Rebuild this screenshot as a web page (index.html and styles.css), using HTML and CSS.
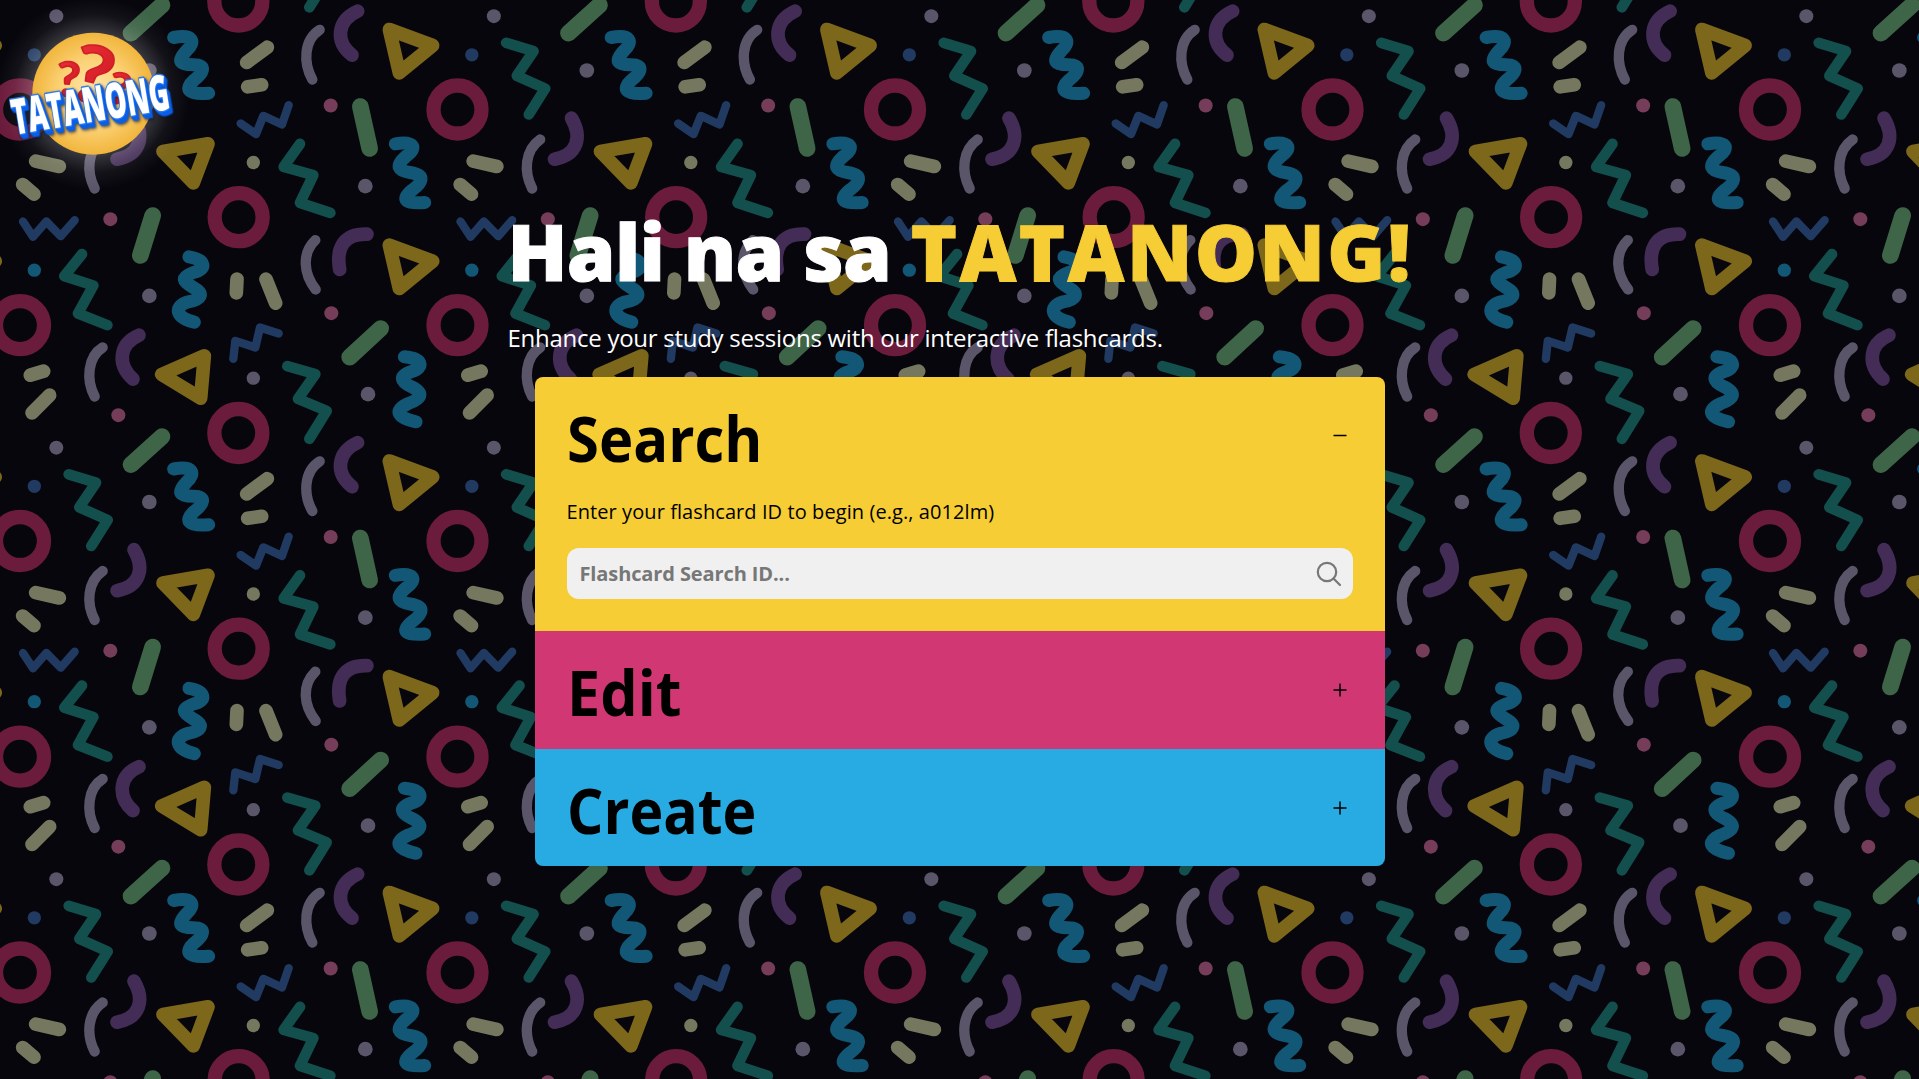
FILE: index.html
```html
<!DOCTYPE html>
<html lang="en">
<head>
<meta charset="utf-8">
<title>TATANONG</title>
<link rel="stylesheet" href="styles.css">
</head>
<body>
<svg class="confetti" width="1919" height="1079" viewBox="0 0 1919 1079" aria-hidden="true">
  <defs>
    <g id="tile">
      <g transform="scale(.33333)">
        <circle class="lavender-dot" cx="169" cy="53" r="21"/>
        <circle class="navy-dot" cx="103" cy="169" r="20"/>
        <path class="teal" d="M206 133L288 158L238 232L323 270L274 348"/>
        <circle class="ring" cx="60" cy="333" r="72"/>
        <path class="green" d="M393 104L486 20"/>
        <circle class="ring" cx="715" cy="9" r="72"/>
        <circle class="lavender-dot" cx="448" cy="216" r="22"/>
        <path class="blue" d="M521 117C580 106 588 130 560 156C528 190 540 199 580 199C624 199 608 225 582 245C552 272 564 290 626 284"/>
        <path class="beige" d="M740 192L802 146M743 265L785 259M107 488L178 504M68 558L102 587"/>
        <path class="navy" d="M722 375L768 407L790 352L846 378L866 320"/>
        <circle class="beige-dot" cx="760" cy="492" r="20"/>
        <path class="purple" d="M402 359C435 415 420 470 351 482"/>
        <path class="lavender" d="M308 423C262 455 258 520 284 570"/>
        <path class="gold" d="M489 459L624 436L580 553Z"/>
        <circle class="rose-dot" cx="331" cy="662" r="21"/>
      </g>
      <g transform="translate(260 0) scale(.33333)">
        <path class="purple" d="M293 38C230 67 225 130 276 170"/>
        <path class="lavender" d="M179 94C130 125 130 195 157 243"/>
        <path class="gold" d="M388 93L518 141L418 223Z"/>
        <circle class="rose-dot" cx="212" cy="321" r="21"/>
        <path class="green" d="M301 324L329 450"/>
        <path class="teal" d="M120 436L71 505L160 530L120 613L211 643"/>
        <circle class="lavender-dot" cx="316" cy="563" r="22"/>
        <path class="blue" d="M406 436C464 426 472 450 440 472C402 504 416 517 450 522C500 530 486 553 456 575C420 606 438 616 494 612"/>
      </g>
      <g transform="translate(0 215) scale(.33333)">
        <path class="navy" d="M69 24L99 70L139 24L182 68L224 20"/>
        <path class="green" d="M458 6L421 126"/>
        <circle class="ring" cx="716" cy="11" r="72"/>
        <circle class="blue-dot" cx="103" cy="170" r="20"/>
        <path class="teal" d="M246 122L193 188L280 216L234 300L322 335"/>
        <circle class="lavender-dot" cx="448" cy="247" r="22"/>
        <path class="blue" d="M567 130C618 138 622 168 580 177C540 192 548 204 580 222C616 242 602 258 565 265C516 280 530 314 583 326"/>
        <path class="beige" d="M711 197L709 238M798 197L827 269M91 485L131 473M96 598L149 545"/>
        <path class="navy" d="M700 436L706 382L766 402L780 342L836 360"/>
        <circle class="lavender-dot" cx="760" cy="494" r="20"/>
        <circle class="ring" cx="60" cy="335" r="72"/>
        <circle class="rose-dot" cx="355" cy="605" r="21"/>
        <path class="lavender" d="M308 402C262 430 258 500 284 549"/>
        <path class="purple" d="M417 365C355 392 352 455 399 497"/>
        <path class="gold" d="M485 483L613 427L602 554Z"/>
      </g>
      <g transform="translate(260 215) scale(.33333)">
        <path class="lavender" d="M166 80C125 120 130 180 167 228"/>
        <path class="purple" d="M321 62C255 60 227 98 239 168"/>
        <path class="gold" d="M388 95L518 143L418 225Z"/>
        <circle class="rose-dot" cx="214" cy="299" r="21"/>
        <path class="green" d="M362 345L269 431"/>
        <path class="teal" d="M82 458L166 482L114 556L200 592L148 676"/>
        <circle class="lavender-dot" cx="324" cy="542" r="22"/>
        <path class="blue" d="M433 430C488 434 494 462 455 474C414 488 422 505 455 520C494 540 484 556 445 570C396 592 416 614 468 625"/>
      </g>
    </g>
    <g id="row">
      <use href="#tile" x="-437.5"/>
      <use href="#tile"/>
      <use href="#tile" x="437.5"/>
      <use href="#tile" x="875"/>
      <use href="#tile" x="1312.5"/>
      <use href="#tile" x="1750"/>
    </g>
  </defs>
  <use href="#row" y="-433"/>
  <use href="#row" y="-1.5"/>
  <use href="#row" y="430"/>
  <use href="#row" y="861.5"/>
</svg>

<svg class="logo" width="220" height="220" viewBox="0 0 660 660" role="img" aria-label="Tatanong">
  <defs>
    <radialGradient id="glow">
      <stop offset=".5" stop-color="#fff" stop-opacity=".32"/>
      <stop offset=".66" stop-color="#fff" stop-opacity=".17"/>
      <stop offset=".82" stop-color="#fff" stop-opacity=".05"/>
      <stop offset="1" stop-color="#fff" stop-opacity="0"/>
    </radialGradient>
    <radialGradient id="sun">
      <stop offset="0" stop-color="#ffeab0"/>
      <stop offset=".55" stop-color="#fcd277"/>
      <stop offset="1" stop-color="#f1b53c"/>
    </radialGradient>
    <linearGradient id="red" x2="1" y2="1">
      <stop offset="0" stop-color="#f0343a"/>
      <stop offset="1" stop-color="#c9141f"/>
    </linearGradient>
  </defs>
  <circle cx="280" cy="281" r="290" fill="url(#glow)"/>
  <circle cx="280" cy="281" r="183" fill="url(#sun)"/>
  <g class="marks">
    <text transform="translate(198 290) rotate(14) scale(1.15 1)" font-size="236">?</text>
    <text transform="translate(166 286) rotate(4) scale(1.1 1)" font-size="142">?</text>
    <text transform="translate(318 304) rotate(12) scale(1.1 1)" font-size="128">?</text>
  </g>
  <g class="wordmark">
    <text transform="translate(44 404) rotate(-9.3)" textLength="476" lengthAdjust="spacingAndGlyphs">TATANONG</text>
  </g>
</svg>

<main class="page">
  <h1 class="title">Hali na sa <span class="brand">TATANONG!</span></h1>
  <p class="tagline">Enhance your study sessions with our interactive flashcards.</p>
  <div class="accordion">
    <section class="panel search">
      <div class="panel-head">
        <h2 class="label-search">Search</h2>
        <svg class="toggle" viewBox="0 0 14 14"><path d="M.5 6.5H13.5"/></svg>
      </div>
      <p class="hint">Enter your flashcard ID to begin (e.g., a012lm)</p>
      <div class="field">
        <span class="placeholder">Flashcard Search ID...</span>
        <svg class="glass" width="26" height="26" viewBox="0 0 26 26"><circle cx="11" cy="11" r="9.2"/><path d="M17.5 17.5L24 24"/></svg>
      </div>
    </section>
    <section class="panel edit">
      <div class="panel-head">
        <h2 class="label-edit">Edit</h2>
        <svg class="toggle" viewBox="0 0 14 14"><path d="M.5 7H13.5M7 .5V13.5"/></svg>
      </div>
    </section>
    <section class="panel create">
      <div class="panel-head">
        <h2 class="label-create">Create</h2>
        <svg class="toggle" viewBox="0 0 14 14"><path d="M.5 7H13.5M7 .5V13.5"/></svg>
      </div>
    </section>
  </div>
</main>
</body>
</html>
```
FILE: styles.css
```css
* { box-sizing: border-box; }
body {
  margin: 0;
  height: 1079px;
  overflow: hidden;
  background: #07060d;
  font-family: "Open Sans", "Noto Sans", sans-serif;
  color: #000;
}
h1, h2, p { margin: 0; }

.confetti { position: absolute; inset: 0; }
.confetti path { fill: none; stroke-linecap: round; stroke-linejoin: round; }
.confetti .teal { stroke: #124f4d; stroke-width: 32; }
.confetti .ring { fill: none; stroke: #6b1b3b; stroke-width: 43; }
.confetti .green { stroke: #3e6547; stroke-width: 50; }
.confetti .blue { stroke: #125775; stroke-width: 39; }
.confetti .beige { stroke: #75785e; stroke-width: 41; }
.confetti .navy { stroke: #203a61; stroke-width: 25; }
.confetti .purple { stroke: #432c55; stroke-width: 41; }
.confetti .lavender { stroke: #5b556a; stroke-width: 31; }
.confetti .gold { stroke: #7d671b; stroke-width: 41; }
.lavender-dot { fill: #5b556a; }
.navy-dot { fill: #203a61; }
.blue-dot { fill: #125775; }
.beige-dot { fill: #75785e; }
.rose-dot { fill: #763d5b; }

.logo { position: absolute; left: 0; top: 0; overflow: visible; }
.marks text { font-family: Lato, sans-serif; font-weight: 700; fill: url(#red); stroke: #cf1f28; stroke-width: 5; stroke-linejoin: round; }
.wordmark {
  filter: drop-shadow(4px 5px 0 #0a5fe8) drop-shadow(5px 7px 0 #0a5fe8) drop-shadow(3px 4px 4px rgba(10, 10, 30, .7));
}
.wordmark text {
  font-family: "Open Sans", sans-serif;
  font-weight: 800;
  font-size: 148px;
  fill: #fff;
  stroke: #2b7df0;
  stroke-width: 8;
  stroke-linejoin: round;
  paint-order: stroke;
}

.page {
  position: relative;
  width: 904px;
  margin: 0 auto;
  padding-top: 196px;
  display: flex;
  flex-direction: column;
}
.title {
  height: 109px;
  line-height: 109px;
  font-size: 78.4px;
  font-weight: 800;
  letter-spacing: -.75px;
  -webkit-text-stroke: 1px currentColor;
  color: #fff;
  white-space: nowrap;
}
.brand { color: #f6cd34; letter-spacing: 2.4px; }
.tagline { height: 72px; line-height: 66px; font-size: 24px; letter-spacing: -.27px; color: #fff; white-space: nowrap; }

.accordion { width: 850px; align-self: center; border-radius: 8px; overflow: hidden; }
.panel { padding: 0 32px; }
.search { height: 254px; background: #f6cd34; }
.edit { height: 118px; background: #d13772; }
.create { height: 117px; background: #27abe2; }
.panel-head { display: flex; justify-content: space-between; align-items: center; height: 117px; padding-right: 6px; }
.panel-head h2 { font-size: 63px; line-height: 117px; font-weight: 700; padding-top: 4px; transform-origin: left; }
.label-search { transform: scaleX(.92); }
.label-edit { transform: scaleX(.94); }
.label-create { transform: scaleX(.908); }
.toggle { width: 14px; height: 14px; fill: none; stroke: #000; stroke-width: 1.5; }
.hint { height: 54px; line-height: 36px; font-size: 20px; letter-spacing: .08px; white-space: nowrap; }
.field {
  display: flex;
  align-items: center;
  justify-content: space-between;
  height: 51px;
  padding: 0 11px 0 13px;
  border-radius: 12px;
  background: #f0f0f0;
}
.placeholder { font-size: 20px; font-weight: 700; letter-spacing: -.11px; color: #777; white-space: nowrap; }
.glass { fill: none; stroke: #777; stroke-width: 2.2; stroke-linecap: round; }
```
